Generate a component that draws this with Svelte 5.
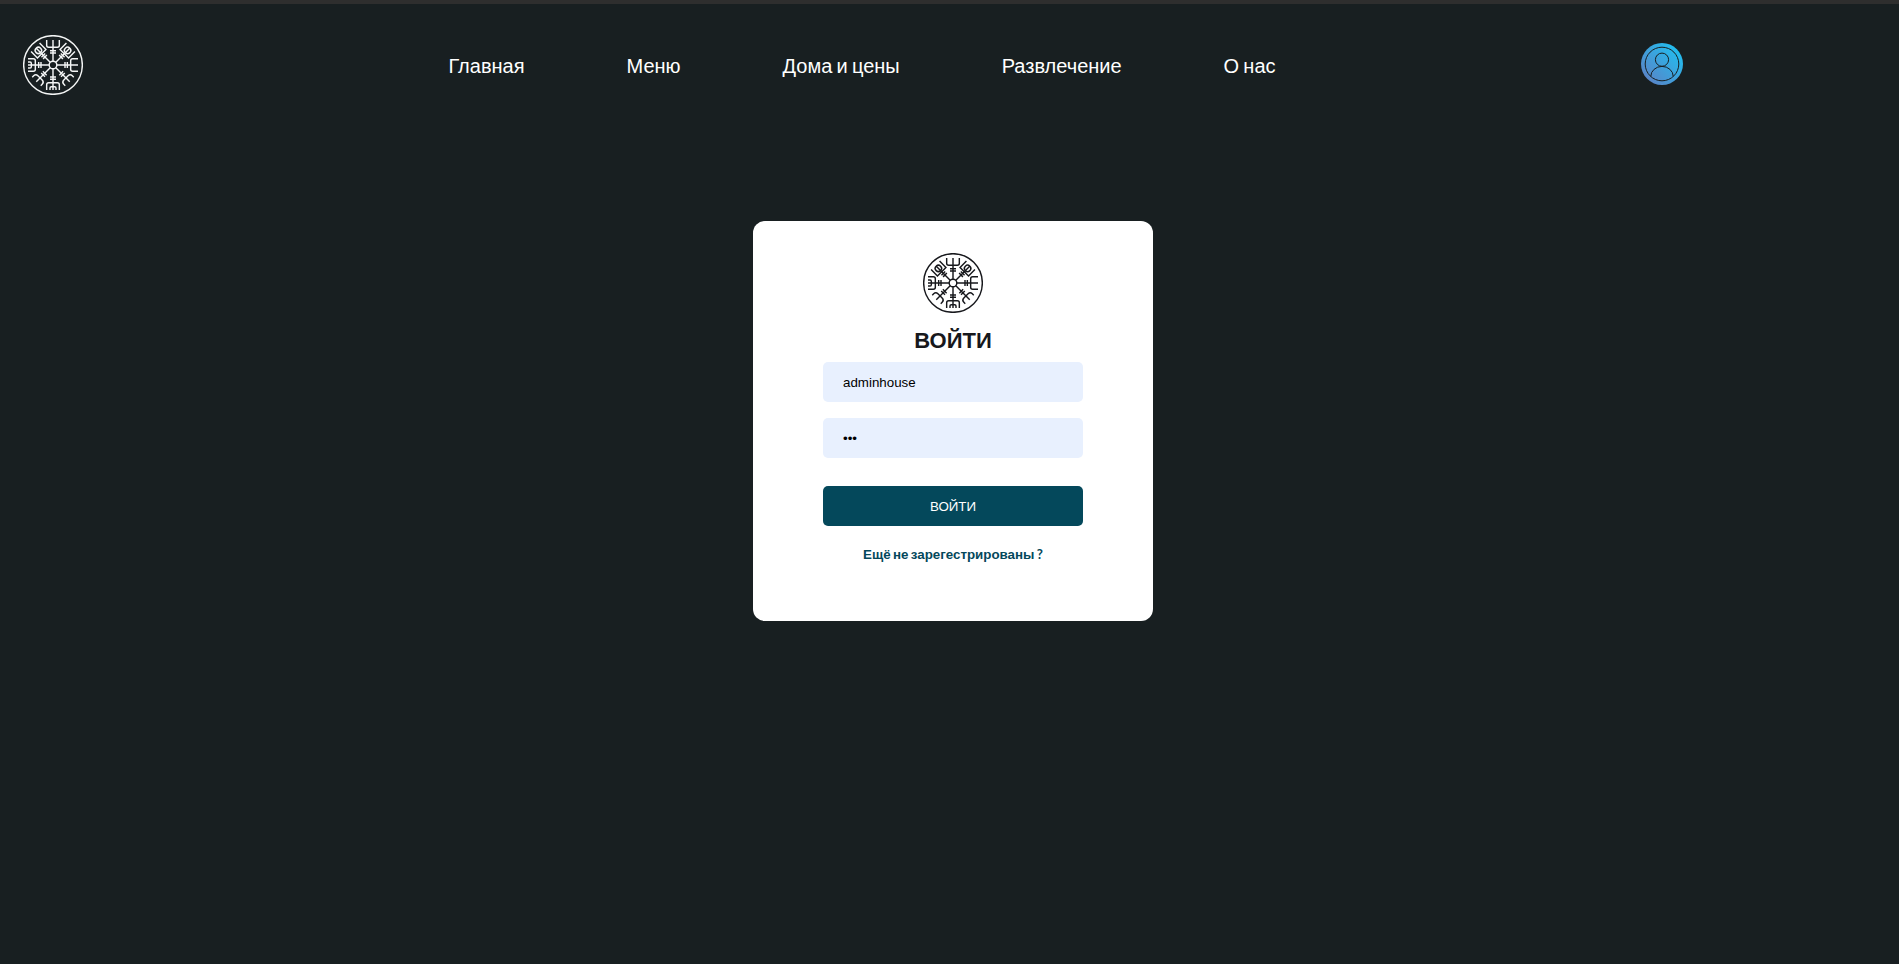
<script>
  const links = ['Главная', 'Меню', 'Дома и цены', 'Развлечение', 'О нас'];
  let login = $state('adminhouse');
  let password = $state('123');
</script>

{#snippet emblem()}
  <svg class="emblem" viewBox="-90 -90 180 180" aria-hidden="true">
    <circle r="88" />
    <circle r="11.5" />
    {#each [0, 45, 90, 135, 180, 225, 270, 315] as angle}
      <g transform="rotate({angle})">
        {#if angle % 90 === 0}
          <path d="M0-12V-75M-9-36H9M-9-43H9" />
          <path d="M-19-75V-59Q-19-53-13-53H13Q19-53 19-59V-75" />
          {#if angle >= 180}
            <path d="M-9-75V-69Q-9-65-5-65H5Q9-65 9-69V-75" />
          {/if}
        {:else if angle === 45 || angle === 315}
          <path d="M0-12V-72M-8-34H8M-8-41H8" />
          <path d="M-18-75V-48H18V-75" />
          <circle cy="-62" r="9.5" />
        {:else}
          <path d="M0-12V-71M-8-35H8M-8-42H8" />
          <path d="M-18-70V-64Q-18-55-9-55H9Q18-55 18-64V-70" />
        {/if}
      </g>
    {/each}
  </svg>
{/snippet}

<div class="page">
  <header>
    <a class="logo" href="#home">{@render emblem()}</a>
    <nav>
      {#each links as link}
        <a href="#{link}">{link}</a>
      {/each}
    </nav>
    <a class="profile" href="#profile" aria-label="Профиль">
      <svg viewBox="-21 -21 42 42">
        <defs>
          <linearGradient id="sky" x1="0" y1="1" x2="1" y2="0">
            <stop offset="0.1" stop-color="#5b82c6" />
            <stop offset="0.9" stop-color="#1fc0f1" />
          </linearGradient>
        </defs>
        <circle r="21" fill="url(#sky)" />
        <g fill="none" stroke="#181f21" stroke-width="1">
          <circle r="16.8" />
          <circle cy="-4.3" r="6.6" />
          <path d="M-11.2 12.4A11.2 10 0 0 1 11.2 12.4" />
        </g>
      </svg>
    </a>
  </header>

  <main>
    <form onsubmit={(e) => e.preventDefault()}>
      {@render emblem()}
      <h1>ВОЙТИ</h1>
      <input type="text" bind:value={login} />
      <input type="password" bind:value={password} />
      <button>ВОЙТИ</button>
      <a class="register" href="#register">Ещё не зарегестрированы <span>?</span></a>
    </form>
  </main>
</div>

<style>
  :global(body) { background: #181f21; }
  .page {
    box-sizing: border-box;
    min-height: 964px;
    border-top: 4px solid #2e2e2e;
    background: #181f21;
    font-family: "Liberation Sans", sans-serif;
    word-spacing: -0.085em;
  }
  a { text-decoration: none; }
  .emblem {
    display: block;
    width: 60px;
    height: 60px;
    fill: none;
    stroke: currentColor;
    stroke-width: 4.3;
  }
  header {
    display: flex;
    align-items: center;
    height: 122px;
    padding-left: 23px;
  }
  .logo { color: #f4f6f6; }
  nav {
    display: flex;
    gap: 102px;
    margin-left: 365.4px;
    padding-top: 2px;
    width: 1192.6px;
  }
  nav a { color: #fff; font-size: 20px; line-height: 24px; }
  .profile svg { display: block; width: 42px; height: 42px; margin-bottom: 2px; }
  main { display: flex; justify-content: center; padding: 95px 0 0 7px; }
  form {
    box-sizing: border-box;
    display: flex;
    flex-direction: column;
    align-items: center;
    width: 400px;
    height: 400px;
    padding-top: 32px;
    border-radius: 12px;
    background: #fff;
    color: #17181c;
  }
  h1 { margin: 15px 0 8px; font-size: 22px; line-height: 26px; }
  input, button {
    box-sizing: border-box;
    width: 260px;
    height: 40px;
    border: 0;
    border-radius: 5px;
    font: 13.333px "Liberation Sans", sans-serif;
  }
  input { padding: 0 20px; margin-bottom: 16px; background: #e8f0fe; color: #000; }
  button { margin-top: 12px; background: #04485b; color: #fff; }
  .register { margin-top: 20px; color: #04485b; font-size: 13.333px; font-weight: 700; line-height: 16px; }
  .register span { font-family: Lato, sans-serif; }
</style>
